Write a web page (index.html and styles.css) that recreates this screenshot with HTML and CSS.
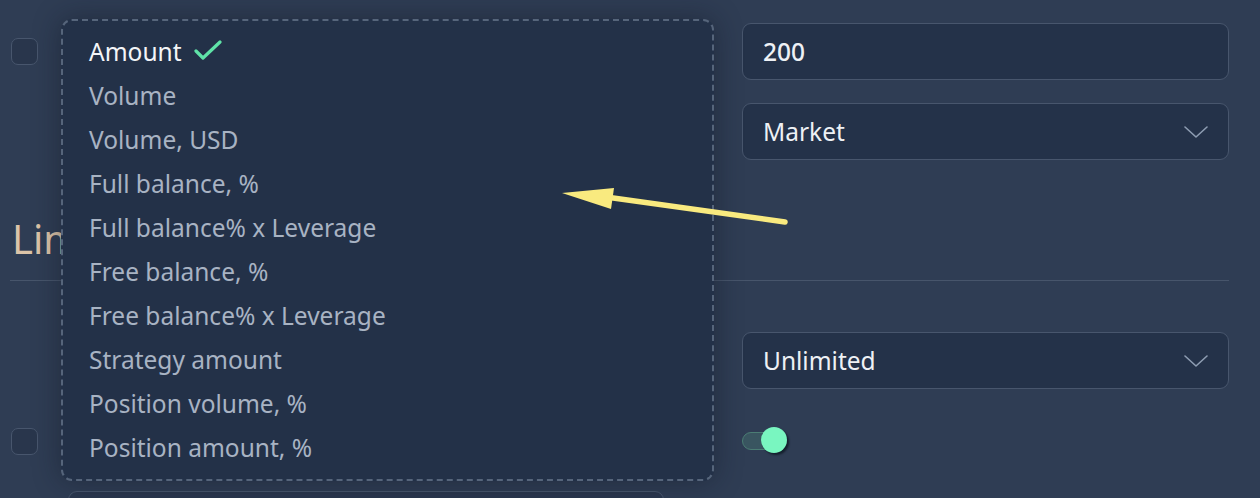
FILE: index.html
```html
<!DOCTYPE html>
<html lang="en">
<head>
<meta charset="utf-8">
<title>Order settings</title>
<link rel="stylesheet" href="styles.css">
</head>
<body>
<div class="page">
  <div class="row row-amount">
    <div class="left"><span class="checkbox"></span></div>
    <div class="field"><span class="value strong">200</span></div>
  </div>
  <div class="row row-type">
    <div class="left"></div>
    <div class="field select"><span class="value">Market</span>
      <svg class="chev" width="24" height="12" viewBox="0 0 24 12"><polyline points="1,1 12,11 23,1" fill="none" stroke="#8e9db2" stroke-width="1.6" stroke-linecap="round" stroke-linejoin="round"/></svg>
    </div>
  </div>
  <h2 class="section">Limits</h2>
  <div class="row row-limit">
    <div class="left"></div>
    <div class="field select"><span class="value">Unlimited</span>
      <svg class="chev" width="24" height="12" viewBox="0 0 24 12"><polyline points="1,1 12,11 23,1" fill="none" stroke="#8e9db2" stroke-width="1.6" stroke-linecap="round" stroke-linejoin="round"/></svg>
    </div>
  </div>
  <div class="row row-toggle">
    <div class="left"><span class="checkbox"></span></div>
    <div class="toggle-wrap"><span class="toggle"><span class="knob"></span></span></div>
  </div>
  <div class="row-bottom"><div class="field wide"></div></div>

  <ul class="dropdown">
    <li class="item active">Amount
      <svg class="check" width="28" height="20" viewBox="0 0 28 20"><polyline points="2,11 9,18 26,2" fill="none" stroke="#5fe3a8" stroke-width="3.2" stroke-linecap="round" stroke-linejoin="round"/></svg>
    </li>
    <li class="item">Volume</li>
    <li class="item">Volume, USD</li>
    <li class="item">Full balance, %</li>
    <li class="item">Full balance% x Leverage</li>
    <li class="item">Free balance, %</li>
    <li class="item">Free balance% x Leverage</li>
    <li class="item">Strategy amount</li>
    <li class="item">Position volume, %</li>
    <li class="item">Position amount, %</li>
  </ul>

  <svg class="arrow" width="1260" height="498" viewBox="0 0 1260 498">
    <line x1="785" y1="222" x2="606" y2="197" stroke="#f9ea7f" stroke-width="5.5" stroke-linecap="round"/>
    <polygon points="562,193 614,188 611,209" fill="#f9ea7f"/>
  </svg>
</div>
</body>
</html>
```
FILE: styles.css
```css
* { box-sizing: border-box; }
html, body { margin: 0; padding: 0; }
body {
  background: #2f3d54;
  font-family: "Noto Sans", "Open Sans", sans-serif;
  color: #f0f3f7;
  width: 1260px;
  height: 498px;
  overflow: hidden;
}
.page {
  position: relative;
  height: 498px;
  overflow: hidden;
  padding: 23px 31px 0 10px;
}
.row {
  display: grid;
  grid-template-columns: 1fr 487px;
  align-items: center;
}
.left { display: flex; align-items: center; padding-left: 1px; }
.checkbox {
  width: 27px;
  height: 27px;
  border: 1.5px solid #48566d;
  border-radius: 7px;
  background: #29364c;
}
.field {
  height: 57px;
  border: 1.5px solid #48566d;
  border-radius: 9px;
  background: #243249;
  display: flex;
  align-items: center;
  justify-content: space-between;
  padding: 0 20px 0 20px;
}
.value { font-size: 24.5px; color: #eef1f5; }
.value.strong { font-weight: 500; }
.chev { display: block; }
.row-type { margin-top: 23px; }
.section {
  margin: 55px 0 0 0;
  font-weight: 400;
  font-size: 40px;
  line-height: 48px;
  color: #dcc4a8;
  padding: 0 0 17px 2px;
  border-bottom: 1.5px solid #47556b;
}
.row-limit { margin-top: 51px; }
.row-toggle { margin-top: 38px; height: 28px; }
.toggle-wrap { display: flex; align-items: center; height: 28px; }
.toggle {
  position: relative;
  width: 40px;
  height: 18px;
  border-radius: 9px;
  background: #395560;
  border: 1.5px solid #4b7d74;
}
.knob {
  position: absolute;
  left: 18px;
  top: -6px;
  width: 26px;
  height: 26px;
  border-radius: 50%;
  background: #79f6c0;
  box-shadow: 2px 2px 2px rgba(10, 20, 30, 0.7);
}
.row-bottom { margin-top: 36px; padding-left: 58px; }
.field.wide { width: 596px; background: #2a374e; }

.dropdown {
  position: absolute;
  left: 61px;
  top: 19px;
  width: 653px;
  height: 462px;
  margin: 0;
  padding: 8px 0 0 26px;
  list-style: none;
  background: #233148;
  border: 2px dashed #56657b;
  border-radius: 11px;
  box-shadow: 0 0 28px rgba(15, 22, 35, 0.45);
}
.item {
  height: 44px;
  display: flex;
  align-items: center;
  font-size: 24.5px;
  color: #a8b3c3;
}
.item.active { color: #f3f5f8; }
.check { margin-left: 12px; margin-top: -2px; }
.arrow { position: absolute; left: 0; top: 0; pointer-events: none; }
```
